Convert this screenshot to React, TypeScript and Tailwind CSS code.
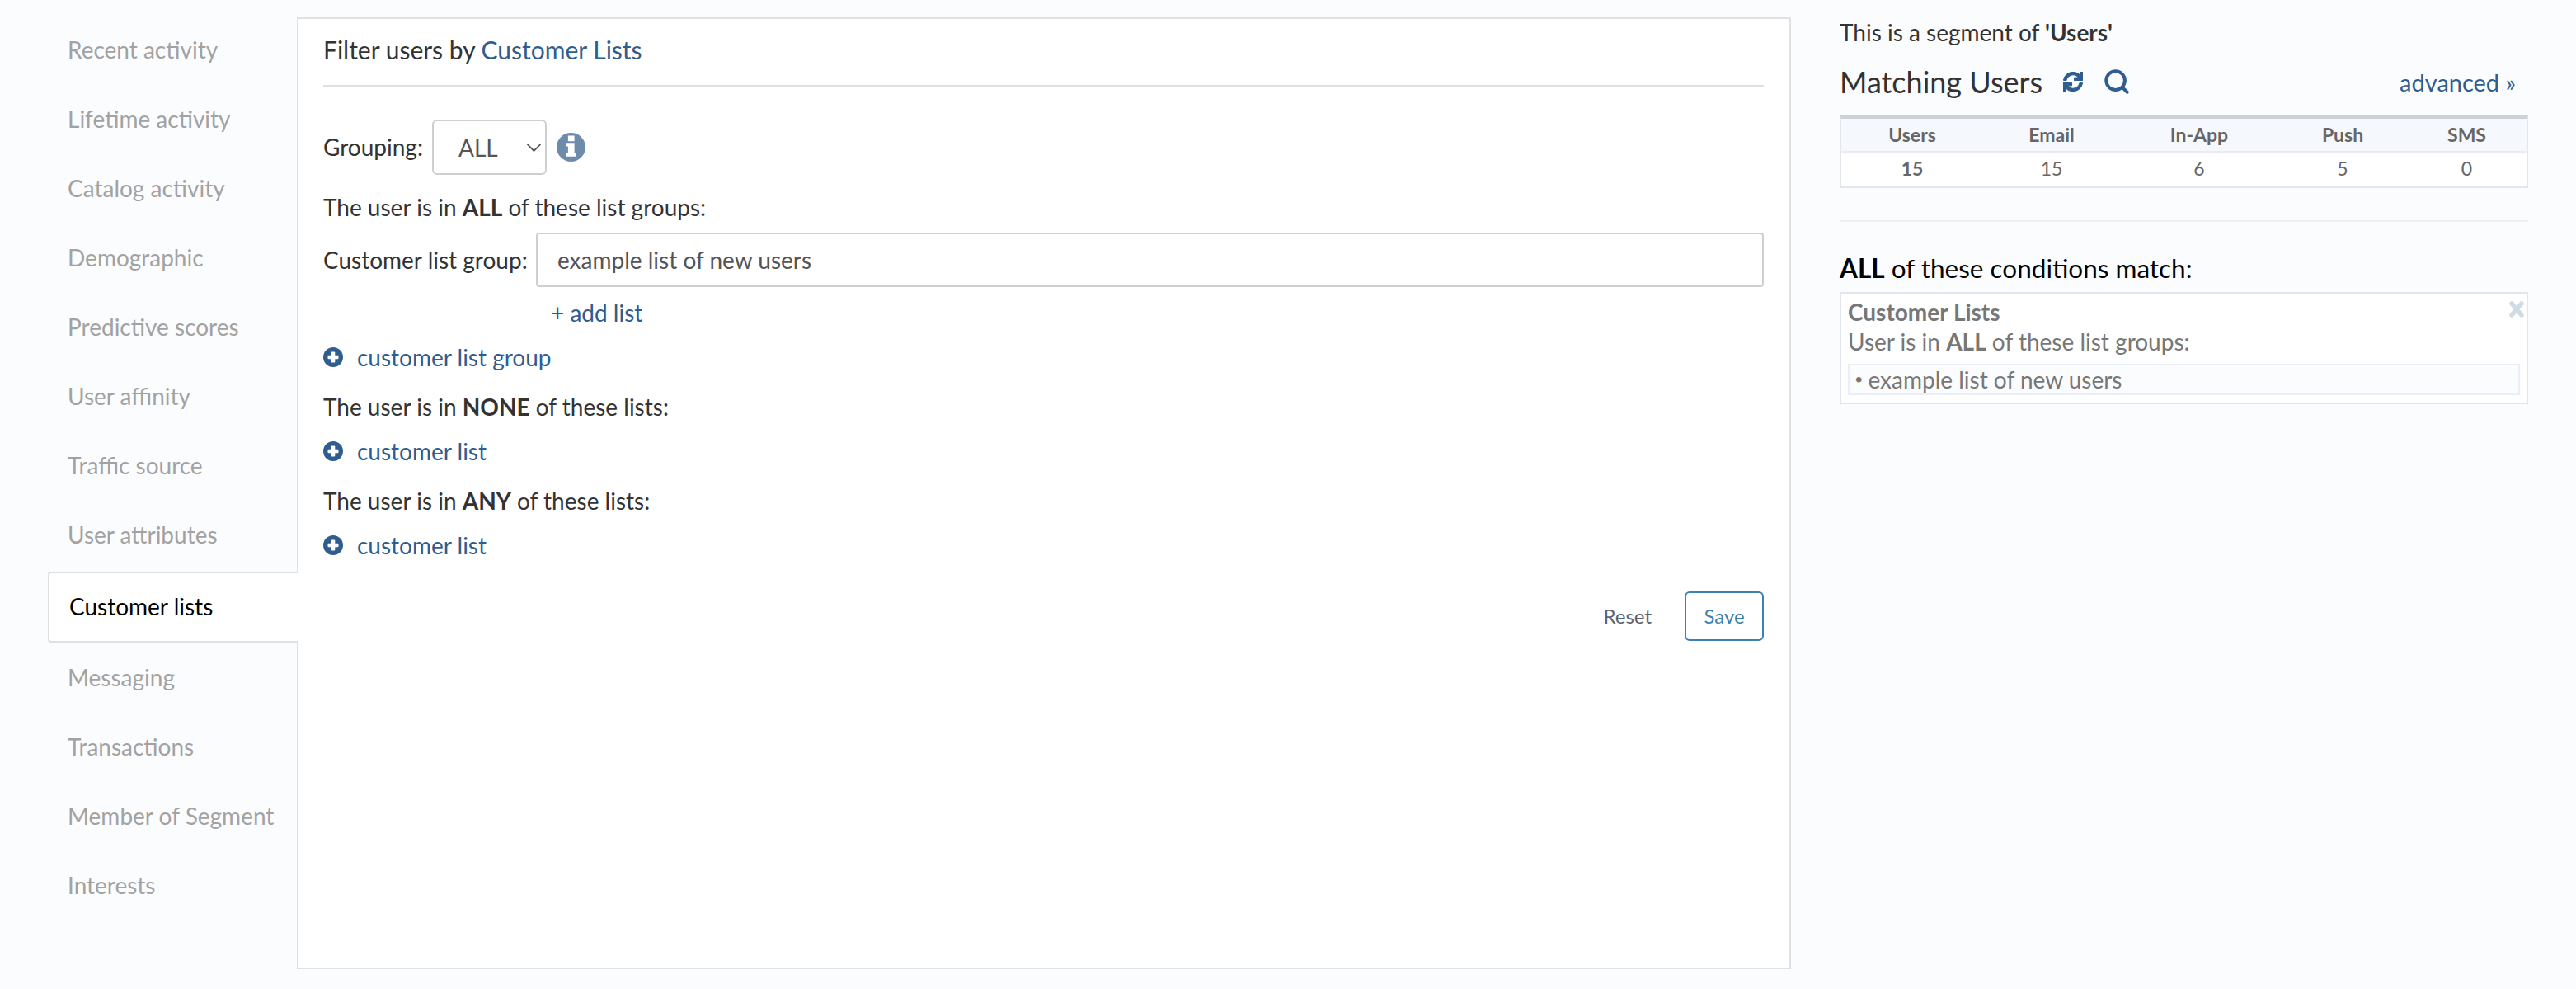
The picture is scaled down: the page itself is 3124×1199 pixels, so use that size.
import { Search } from "lucide-react";
import { FaSync } from "react-icons/fa";

const topItems = [
  "Recent activity",
  "Lifetime activity",
  "Catalog activity",
  "Demographic",
  "Predictive scores",
  "User affinity",
  "Traffic source",
  "User attributes",
];

const bottomItems = ["Messaging", "Transactions", "Member of Segment", "Interests"];

function NavItem({ label }: { label: string }) {
  return <div className="flex h-[84px] items-center pl-[24px] text-[28px] text-[#a2a2a2]">{label}</div>;
}

function PlusIcon() {
  return (
    <svg viewBox="0 0 24 24" className="h-[24px] w-[24px] shrink-0">
      <circle cx="12" cy="12" r="12" fill="#2f5d8f" />
      <rect x="5.5" y="9.7" width="13" height="4.6" rx="1" fill="#fff" />
      <rect x="9.7" y="5.5" width="4.6" height="13" rx="1" fill="#fff" />
    </svg>
  );
}

function InfoIcon() {
  return (
    <svg viewBox="0 0 34 34" className="ml-[12px] h-[35px] w-[35px] shrink-0">
      <circle cx="17" cy="17" r="17" fill="#6d8cab" />
      <path d="M13.5 3.5h7.5v6.5h-7.5zM11 12h10v12h2v4H11v-4h2.5v-8H11z" fill="#fff" />
    </svg>
  );
}

function AddRow({ label, className }: { label: string; className: string }) {
  return (
    <div className={`flex h-[32px] items-center gap-[17px] text-[28px] text-[#2f5d8f] ${className}`}>
      <PlusIcon />
      <span>{label}</span>
    </div>
  );
}

const statCols = [
  { label: "Users", value: "15", bold: true },
  { label: "Email", value: "15" },
  { label: "In-App", value: "6" },
  { label: "Push", value: "5" },
  { label: "SMS", value: "0" },
];

export default function App() {
  return (
    <div className="flex h-[1199px] w-[3124px] items-start overflow-hidden bg-[#fbfcfe] pt-[18px] pl-[58px] font-['Lato',sans-serif] text-[#333]">
      <nav className="relative z-10 -mr-[2px] w-[304px] shrink-0">
        {topItems.map((item) => (
          <NavItem key={item} label={item} />
        ))}
        <div className="mt-[3px] flex h-[86px] items-center rounded-l-[4px] border-2 border-r-0 border-[#dfe0e3] bg-white pb-[2px] pl-[24px] text-[28px] text-black">
          Customer lists
        </div>
        {bottomItems.map((item) => (
          <NavItem key={item} label={item} />
        ))}
      </nav>

      <main className="mt-[3px] h-[1154px] w-[1812px] shrink-0 border-2 border-[#dfe0e3] bg-white pr-[31px] pl-[30px]">
        <div className="flex h-[82px] items-center border-b-2 border-[#dfe0e3] pb-[6px] text-[30px]">
          Filter users by&nbsp;<span className="text-[#2f5d8f]">Customer Lists</span>
        </div>

        <div className="mt-[40px] flex h-[67px] items-center text-[28px]">
          <span className="pb-[1px]">Grouping:</span>
          <div className="relative ml-[11px]">
            <select className="h-[67px] w-[139px] appearance-none rounded-[6px] border-2 border-[#cfcfcf] bg-white pl-[30px] text-[28px] text-[#555]">
              <option>ALL</option>
            </select>
            <svg viewBox="0 0 17 10" className="pointer-events-none absolute top-[29px] right-[7px] h-[10px] w-[17px]">
              <path d="M0.5 0.8 8.5 9 16.5 0.8" fill="none" stroke="#555" strokeWidth="1.8" />
            </svg>
          </div>
          <InfoIcon />
        </div>

        <div className="mt-[23px] h-[32px] text-[28px] leading-[32px]">
          The user is in <b>ALL</b> of these list groups:
        </div>

        <div className="mt-[15px] flex items-center text-[28px]">
          <span className="w-[258px] shrink-0">Customer list group:</span>
          <input
            readOnly
            value="example list of new users"
            className="h-[66px] flex-1 rounded-[4px] border-2 border-[#cfcfcf] bg-white pl-[24px] text-[28px] text-[#555]"
          />
        </div>

        <div className="mt-[15px] h-[32px] pl-[276px] text-[28px] leading-[32px] text-[#2f5d8f]">+ add list</div>

        <AddRow label="customer list group" className="mt-[22px]" />

        <div className="mt-[28px] h-[32px] text-[28px] leading-[32px]">
          The user is in <b>NONE</b> of these lists:
        </div>

        <AddRow label="customer list" className="mt-[22px]" />

        <div className="mt-[28px] h-[32px] text-[28px] leading-[32px]">
          The user is in <b>ANY</b> of these lists:
        </div>

        <AddRow label="customer list" className="mt-[22px]" />

        <div className="mt-[40px] flex items-center justify-end text-[24px]">
          <button className="mr-[40px] text-[#5a6472]">Reset</button>
          <button className="h-[60px] w-[96px] rounded-[6px] border-2 border-[#3a83b0] text-[#3a83b0]">Save</button>
        </div>
      </main>

      <aside className="ml-[59px] w-[835px] shrink-0 pt-[5px]">
        <div className="h-[32px] text-[28px] leading-[32px]">
          This is a segment of <b>'Users'</b>
        </div>

        <div className="mt-[22px] flex h-[44px] items-center text-[36px]">
          <span className="pb-[1px]">Matching Users</span>
          <FaSync className="ml-[25px] h-[24px] w-[24px] text-[#2f5d8f]" stroke="currentColor" strokeWidth={24} />
          <Search className="ml-[24px] h-[34px] w-[34px] text-[#2f5d8f]" strokeWidth={2.8} />
          <span className="mt-[2px] mr-[15px] ml-auto text-[29px] text-[#2f5d8f]">advanced »</span>
        </div>

        <div className="mt-[19px] border-2 border-t-4 border-[#e3e6ea] border-t-[#cdd2d7] bg-white text-[23px]">
          <div className="grid h-[41px] grid-cols-[172px_166px_192px_156px_145px] items-center border-b-2 border-[#e8ecf0] bg-[#f5f8fc] pb-[1px] text-center font-bold text-[#666]">
            {statCols.map((col) => (
              <div key={col.label}>{col.label}</div>
            ))}
          </div>
          <div className="grid h-[41px] grid-cols-[172px_166px_192px_156px_145px] items-center pb-[2px] text-center text-[#666]">
            {statCols.map((col) => (
              <div key={col.label} className={col.bold ? "font-bold" : ""}>
                {col.value}
              </div>
            ))}
          </div>
        </div>

        <div className="mt-[39px] h-[2px] bg-[#eef0f3]" />

        <div className="mt-[36px] h-[40px] text-[31.5px] leading-[40px] text-black">
          <b>ALL</b> of these conditions match:
        </div>

        <div className="relative mt-[9px] h-[136px] border-2 border-[#dfe6ef] bg-white px-[8px]">
          <svg viewBox="0 0 18 20" className="absolute top-[9px] right-[3px] h-[20px] w-[18px]">
            <path d="M3 3 15 17M15 3 3 17" stroke="#cfdbe5" strokeWidth="5.5" strokeLinecap="round" />
          </svg>
          <div className="mt-[6px] h-[32px] text-[28px] font-bold leading-[32px] text-[#777]">Customer Lists</div>
          <div className="mt-[4px] h-[32px] text-[28px] leading-[32px] text-[#777]">
            User is in <b>ALL</b> of these list groups:
          </div>
          <div className="mt-[11px] flex h-[38px] items-center border-2 border-[#e9eefb] bg-[#fbfcfe] pb-[1px] pl-[6px] text-[28px] text-[#777]">
            <span className="mr-[6px] text-[18px]">•</span>example list of new users
          </div>
        </div>
      </aside>
    </div>
  );
}
